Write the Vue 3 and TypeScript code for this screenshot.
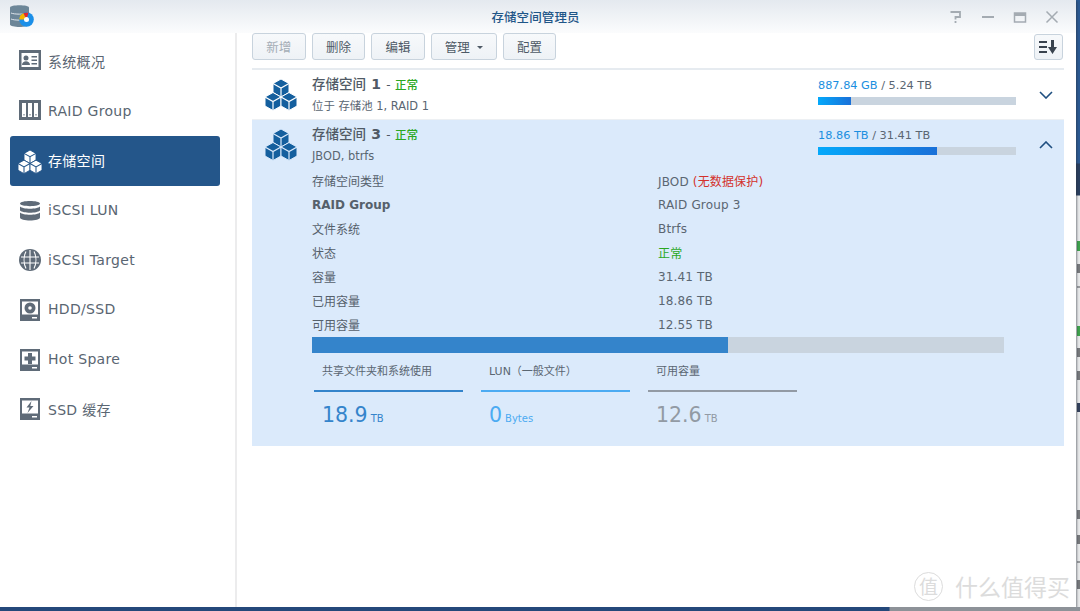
<script setup lang="ts">
type NavItem = { key: string; label: string; active?: boolean }
type Detail = { label: string; value: string; bold?: boolean; ok?: boolean; warn?: string }
type Legend = { label: string; num: string; unit: string; tone: string }

const navItems: NavItem[] = [
  { key: 'overview', label: '系统概况' },
  { key: 'raid', label: 'RAID Group' },
  { key: 'volume', label: '存储空间', active: true },
  { key: 'lun', label: 'iSCSI LUN' },
  { key: 'target', label: 'iSCSI Target' },
  { key: 'hdd', label: 'HDD/SSD' },
  { key: 'spare', label: 'Hot Spare' },
  { key: 'cache', label: 'SSD 缓存' },
]

const actions = ['新增', '删除', '编辑', '管理', '配置']

const details: Detail[] = [
  { label: '存储空间类型', value: 'JBOD', warn: '(无数据保护)' },
  { label: 'RAID Group', value: 'RAID Group 3', bold: true },
  { label: '文件系统', value: 'Btrfs' },
  { label: '状态', value: '正常', ok: true },
  { label: '容量', value: '31.41 TB' },
  { label: '已用容量', value: '18.86 TB' },
  { label: '可用容量', value: '12.55 TB' },
]

const legends: Legend[] = [
  { label: '共享文件夹和系统使用', num: '18.9', unit: 'TB', tone: 'used' },
  { label: 'LUN（一般文件）', num: '0', unit: 'Bytes', tone: 'lun' },
  { label: '可用容量', num: '12.6', unit: 'TB', tone: 'free' },
]

// 三个等轴立方体
const cubes = [
  [16, 9],
  [8, 22.5],
  [24, 22.5],
]
const hex = (x: number, y: number) =>
  `M${x} ${y - 9}L${x + 8} ${y - 4.5}V${y + 4.5}L${x} ${y + 9}L${x - 8} ${y + 4.5}V${y - 4.5}Z`
const seams = (x: number, y: number) =>
  `M${x - 8} ${y - 4.5}L${x} ${y}L${x + 8} ${y - 4.5}M${x} ${y}V${y + 9}`

// 窗口右侧露出的后方页面
const peeks = [
  { top: 241, h: 10, c: '#3fa34d' },
  { top: 264, h: 9, c: '#77797c' },
  { top: 286, h: 2, c: '#9a9c9f' },
  { top: 326, h: 10, c: '#3fa34d' },
  { top: 348, h: 9, c: '#77797c' },
  { top: 371, h: 9, c: '#77797c' },
  { top: 403, h: 9, c: '#33415c' },
  { top: 510, h: 9, c: '#77797c' },
  { top: 535, h: 9, c: '#77797c' },
  { top: 561, h: 2, c: '#9a9c9f' },
  { top: 580, h: 9, c: '#77797c' },
]
</script>

<template>
  <div class="desktop">
    <div class="peek">
      <i v-for="p in peeks" :key="p.top" :style="{ top: p.top + 'px', height: p.h + 'px', background: p.c }"></i>
    </div>

    <div class="window">
      <header class="titlebar">
        <svg class="app-icon" width="24" height="22" viewBox="0 0 24 22">
          <path d="M0 2.500c0-3 19-3 19 0v17c0 3.300-19 3.300-19 0z" fill="#6c8698" />
          <path d="M1 8c3 1.500 14 1.500 17 0M1 14c3 1.500 14 1.500 17 0" stroke="#dfe6ec" fill="none" />
          <circle cx="16.500" cy="14.500" r="7.300" fill="#1b8fe8" />
          <path d="M16.500 14.500H9.200a7.300 7.300 0 0 1 4.300-6.600z" fill="#f5b400" />
          <path d="M16.500 14.500l-3-6.600 5-.4z" fill="#e8262a" />
          <circle cx="16.500" cy="14.500" r="2.500" fill="#fff" />
        </svg>
        <div class="title">存储空间管理员</div>
        <div class="win-btns">
          <svg width="14" height="14" viewBox="0 0 14 14" fill="none" stroke="#a4abb2" stroke-width="1.800">
            <path d="M1.500 2h9.500v5H6.500v2.500M6.500 11v2" />
          </svg>
          <svg width="14" height="14" viewBox="0 0 14 14"><path d="M1 7h12" stroke="#a4abb2" stroke-width="2" /></svg>
          <svg width="14" height="14" viewBox="0 0 14 14" fill="none" stroke="#a4abb2">
            <path d="M1.500 3h11v9h-11z" stroke-width="1.500" /><path d="M1 4.500h12" stroke-width="3" />
          </svg>
          <svg width="14" height="14" viewBox="0 0 14 14"><path d="M1.500 1.500l11 11M12.500 1.500l-11 11" stroke="#a4abb2" stroke-width="1.500" /></svg>
        </div>
      </header>

      <div class="body">
        <nav class="sidebar">
          <a v-for="item in navItems" :key="item.key" class="nav-item" :class="{ active: item.active }">
            <svg class="nav-icon" width="22" height="22" viewBox="0 0 22 22">
              <template v-if="item.key === 'overview'">
                <path fill-rule="evenodd" d="M0 0h22v20H0zM2.500 3v14h17V3z" fill="currentColor" />
                <circle cx="7" cy="8" r="2.500" fill="currentColor" />
                <path d="M3 15c0-5 8-5 8 0zM12.500 6h5.500v1.500h-5.500zM12.500 9.500h5.500V11h-5.500zM12.500 13h5.500v1.500h-5.500z" fill="currentColor" />
              </template>
              <template v-else-if="item.key === 'raid'">
                <path fill-rule="evenodd" d="M0 0h22v20H0zM3 3v14h4V3zM9 3v14h4V3zM15 3v14h4V3z" fill="currentColor" />
                <path d="M4.500 14h1v1.500h-1zM10.500 14h1v1.500h-1zM16.500 14h1v1.500h-1z" fill="currentColor" />
              </template>
              <template v-else-if="item.key === 'volume'">
                <g transform="translate(-1 0) scale(.75)">
                  <template v-for="c in cubes" :key="c[0]">
                    <path :d="hex(c[0], c[1])" fill="#fff" stroke="#24568a" stroke-width="1.200" />
                    <path :d="seams(c[0], c[1])" fill="none" stroke="#24568a" stroke-width="1.400" />
                  </template>
                </g>
              </template>
              <template v-else-if="item.key === 'lun'">
                <path d="M1 3.500C1 0 21 0 21 3.500S1 7 1 3.500zM1 6.500c3 3 17 3 20 0v4c-3 3-17 3-20 0zM1 12.500c3 3 17 3 20 0v5c0 4-20 4-20 0z" fill="currentColor" />
              </template>
              <template v-else-if="item.key === 'target'">
                <circle cx="11" cy="11" r="11" fill="currentColor" />
                <path d="M2 8h18M2 14h18M11 1v20M7 2.500c-2.500 5-2.500 12 0 17M15 2.500c2.500 5 2.500 12 0 17" fill="none" stroke="#fff" stroke-width="1.100" />
              </template>
              <template v-else>
                <path fill-rule="evenodd" d="M1 0h20v22H1z" fill="currentColor" />
                <path d="M3 2.500h16v13H3zM13 18h5v1.500h-5z" fill="#fff" />
                <template v-if="item.key === 'hdd'">
                  <circle cx="11" cy="9" r="5.500" fill="currentColor" />
                  <circle cx="11" cy="9" r="1.800" fill="#fff" />
                </template>
                <path v-else-if="item.key === 'spare'" d="M9 4h4v3.500h3.500v4H13V15H9v-3.500H5.500v-4H9z" fill="currentColor" />
                <path v-else d="M12.500 3L7.500 9.500h3L8.500 15l6-7h-3.200z" fill="currentColor" />
              </template>
            </svg>
            <span>{{ item.label }}</span>
          </a>
        </nav>

        <main class="main">
          <div class="toolbar">
            <button
              v-for="(a, i) in actions"
              :key="a"
              class="btn"
              :class="{ disabled: i === 0, menu: a === '管理' }"
            >
              {{ a }}<i v-if="a === '管理'" class="caret"></i>
            </button>
            <button class="btn sort">
              <svg width="18" height="14" viewBox="0 0 18 14">
                <path d="M0 1h8v2H0zM0 6h8v2H0zM0 11h8v2H0z" fill="#39434e" />
                <path d="M12 0h3v7h3l-4.500 7L9 7h3z" fill="#39434e" />
              </svg>
            </button>
          </div>

          <section class="row">
            <div class="row-head">
              <svg class="cube" width="32" height="32" viewBox="0 0 32 32">
                <template v-for="c in cubes" :key="c[0]">
                  <path :d="hex(c[0], c[1])" fill="#145f9e" stroke="#fff" stroke-width="1" />
                  <path :d="seams(c[0], c[1])" fill="none" stroke="#fff" stroke-width="1.200" />
                </template>
              </svg>
              <div class="row-info">
                <div class="row-title">存储空间 <b>1</b> <em>-</em> <span class="ok">正常</span></div>
                <div class="row-sub">位于 存储池 1, RAID 1</div>
              </div>
              <div class="usage">
                <div class="usage-text"><span class="blue">887.84 GB</span> / 5.24 TB</div>
                <div class="usage-bar"><div class="usage-fill" :style="{ width: '16.5%' }"></div></div>
              </div>
              <svg class="chev" width="14" height="8" viewBox="0 0 14 8"><path d="M1 1l6 6 6-6" fill="none" stroke="#1f4f80" stroke-width="1.600" /></svg>
            </div>
          </section>

          <section class="row open">
            <div class="row-head">
              <svg class="cube" width="32" height="32" viewBox="0 0 32 32">
                <template v-for="c in cubes" :key="c[0]">
                  <path :d="hex(c[0], c[1])" fill="#145f9e" stroke="#dbeafb" stroke-width="1" />
                  <path :d="seams(c[0], c[1])" fill="none" stroke="#dbeafb" stroke-width="1.200" />
                </template>
              </svg>
              <div class="row-info">
                <div class="row-title">存储空间 <b>3</b> <em>-</em> <span class="ok">正常</span></div>
                <div class="row-sub">JBOD, btrfs</div>
              </div>
              <div class="usage">
                <div class="usage-text"><span class="blue">18.86 TB</span> / 31.41 TB</div>
                <div class="usage-bar"><div class="usage-fill" :style="{ width: '60%' }"></div></div>
              </div>
              <svg class="chev" width="14" height="8" viewBox="0 0 14 8"><path d="M1 7l6-6 6 6" fill="none" stroke="#1f4f80" stroke-width="1.600" /></svg>
            </div>

            <div class="details">
              <div v-for="d in details" :key="d.label" class="detail">
                <div class="detail-label" :class="{ bold: d.bold }">{{ d.label }}</div>
                <div class="detail-value" :class="{ ok: d.ok, warned: d.warn }">
                  {{ d.value }} <span v-if="d.warn" class="warn">{{ d.warn }}</span>
                </div>
              </div>
            </div>

            <div class="big-bar"><div class="big-fill" :style="{ width: '60.1%' }"></div></div>

            <div class="legends">
              <div v-for="l in legends" :key="l.label" class="legend" :class="l.tone">
                <div class="legend-label">{{ l.label }}</div>
                <div class="legend-num">{{ l.num }}<small>{{ l.unit }}</small></div>
              </div>
            </div>
          </section>
        </main>
      </div>

      <div class="watermark">
        <span class="wm-logo">值</span>
        <span>什么值得买</span>
      </div>
    </div>
  </div>
</template>

<style>
html,
body {
  margin: 0;
  background: #fff;
}
</style>

<style scoped>
.desktop {
  position: relative;
  width: 1080px;
  height: 611px;
  overflow: hidden;
  background: linear-gradient(180deg, #2c5a94 0, #2c5a94 163px, #2a3f5f 164px, #2a3f5f 195px, #e9eaeb 196px, #e9eaeb 606px);
  font-family: "DejaVu Sans", "Noto Sans CJK SC", sans-serif;
  color: #5a6672;
}

.peek {
  position: absolute;
  left: 1077px;
  top: 0;
  width: 3px;
  height: 100%;
}

.peek i {
  position: absolute;
  left: 0;
  width: 3px;
}

.window {
  position: relative;
  width: 1076px;
  height: 607px;
  display: flex;
  flex-direction: column;
  background: #fff;
  box-shadow: 1px 1px 2px rgba(40, 50, 60, 0.55);
}

.desktop::after {
  content: "";
  position: absolute;
  left: 0;
  right: 0;
  top: 607px;
  height: 4px;
  background: linear-gradient(90deg, #24487a 0, #24487a 889px, #8d9298 890px);
}

.titlebar {
  flex: none;
  height: 33px;
  display: flex;
  align-items: center;
  padding: 0 17px 0 10px;
  background: linear-gradient(180deg, #e4e9ef 0, #fbfcfd 100%);
}

.app-icon {
  flex: none;
  margin-top: -1px;
}

.title {
  flex: 1;
  text-align: center;
  padding-left: 88px;
  font-size: 12.500px;
  font-weight: 500;
  color: #1f5688;
  letter-spacing: 0.1px;
}

.win-btns {
  display: flex;
  gap: 18px;
}

.body {
  flex: 1;
  display: flex;
  min-height: 0;
}

.sidebar {
  flex: none;
  width: 237px;
  box-sizing: border-box;
  padding: 3.600px 15px 0 10px;
  border-right: 2px solid #ececed;
}

.nav-item {
  height: 49.700px;
  display: flex;
  align-items: center;
  gap: 7px;
  padding-left: 9px;
  box-sizing: border-box;
  border-radius: 3px;
  font-size: 14px;
  letter-spacing: 0.3px;
  color: #5a6672;
}

.nav-item span {
  margin-top: -1px;
}

.nav-icon {
  flex: none;
  overflow: visible;
  color: #5f6b78;
}

.nav-item.active {
  background: #24568a;
  color: #fff;
}

.nav-item.active .nav-icon {
  color: #fff;
}

.main {
  flex: 1;
  min-width: 0;
  padding-left: 15px;
  padding-right: 12px;
}

.toolbar {
  height: 35px;
  display: flex;
  align-items: flex-start;
  gap: 6px;
  border-bottom: 2px solid #e6ebf0;
}

.btn {
  width: 53.600px;
  height: 27px;
  box-sizing: border-box;
  padding: 0;
  border: 1px solid #c8d3dd;
  border-radius: 3px;
  background: linear-gradient(180deg, #f7f9fb, #eef2f6);
  font: inherit;
  font-size: 12.500px;
  color: #4e5a66;
  display: flex;
  align-items: center;
  justify-content: center;
}

.btn.disabled {
  color: #a4adb6;
}

.btn.menu {
  width: 66px;
}

.caret {
  width: 0;
  height: 0;
  margin-left: 7px;
  margin-top: 2px;
  border: 3px solid transparent;
  border-top-color: #4e5a66;
  border-bottom: 0;
}

.sort {
  width: 29.500px;
  margin-left: auto;
  margin-right: 1px;
  margin-top: 1px;
  height: 26px;
}

.row {
  border-bottom: 1px solid #edf0f3;
}

.row.open {
  background: #dbeafb;
  height: 326px;
  border-bottom: 0;
}

.row-head {
  height: 49px;
  display: flex;
  align-items: center;
  padding-left: 13px;
}

.cube {
  flex: none;
}

.row-info {
  width: 506px;
  margin-left: 15px;
}

.row-title {
  font-size: 13.500px;
  font-weight: 500;
  color: #505a65;
  line-height: 20px;
}

.row-title b {
  margin: 0 1px;
  font-weight: 700;
  font-size: 14px;
}

.row-title em {
  font-style: normal;
  font-size: 12px;
}

.row-title .ok {
  font-size: 11.500px;
}

.row-sub {
  margin-top: 2px;
  font-size: 11.400px;
  line-height: 18px;
}

.ok {
  color: #2aa81f;
}

.usage {
  width: 198px;
  margin-top: -6px;
}

.usage-text {
  font-size: 11.300px;
  line-height: 16px;
  margin-bottom: 3px;
}

.blue {
  color: #1a8fe0;
}

.usage-bar {
  height: 8px;
  background: #c9d4df;
}

.usage-fill {
  height: 100%;
  background: linear-gradient(90deg, #04a9fb, #1a70d8);
}

.chev {
  margin-left: 23px;
}

.details {
  padding-left: 60px;
}

.detail {
  display: flex;
  height: 24px;
  align-items: center;
  font-size: 12px;
}

.detail-label {
  width: 346px;
  margin-top: -2px;
  color: #55606b;
}

.detail-label.bold {
  margin-top: 0;
  font-weight: 700;
}

.detail-value {
  letter-spacing: 0.15px;
}

.detail-value.ok,
.detail-value.warned {
  margin-top: -2px;
}

.warn {
  color: #d3322c;
}

.big-bar {
  margin: 0 60px;
  height: 16px;
  background: #c9d4df;
}

.big-fill {
  height: 100%;
  background: #3484cb;
}

.legends {
  display: flex;
  gap: 18px;
  margin: 0 0 0 62px;
}

.legend {
  width: 149px;
  box-sizing: border-box;
}

.legend-label {
  height: 39px;
  box-sizing: border-box;
  padding: 9px 0 0 8px;
  font-size: 11px;
  line-height: 20px;
  border-bottom: 2px solid;
}

.legend-num {
  padding: 9px 0 0 8px;
  font-size: 20.500px;
  line-height: 28px;
}

.legend-num small {
  margin-left: 3px;
  font-size: 10px;
}

.legend.used .legend-label {
  border-color: #3484cb;
}

.legend.used .legend-num {
  color: #3484cb;
}

.legend.lun .legend-label {
  border-color: #4cabf2;
}

.legend.lun .legend-num {
  color: #4cabf2;
}

.legend.free .legend-label {
  border-color: #929aa4;
}

.legend.free .legend-num {
  color: #929aa4;
}

.watermark {
  position: absolute;
  left: 914px;
  top: 571px;
  display: flex;
  align-items: center;
  gap: 12px;
  font-size: 23px;
  line-height: 30px;
  color: #dcdcdc;
  white-space: nowrap;
  font-family: "Noto Sans CJK SC", sans-serif;
}

.wm-logo {
  width: 27px;
  height: 27px;
  border: 1px solid #dcdcdc;
  border-radius: 50%;
  display: flex;
  align-items: center;
  justify-content: center;
  font-size: 19px;
}
</style>
